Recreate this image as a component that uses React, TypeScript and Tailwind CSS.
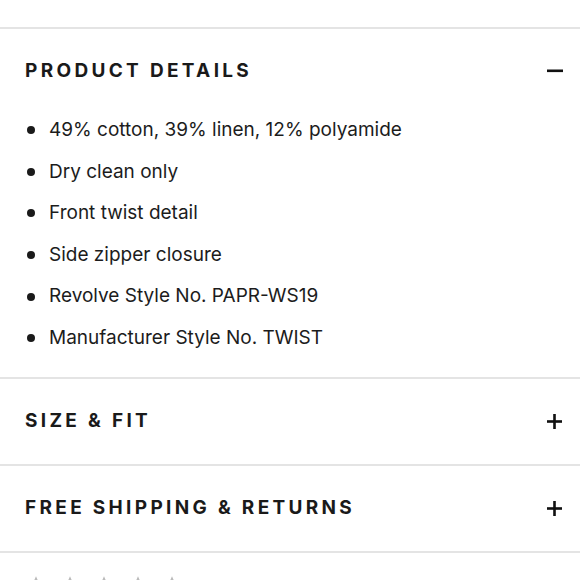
import React from "react";

const items = [
  "49% cotton, 39% linen, 12% polyamide",
  "Dry clean only",
  "Front twist detail",
  "Side zipper closure",
  "Revolve Style No. PAPR-WS19",
  "Manufacturer Style No. TWIST",
];

function Minus() {
  return (
    <svg width="16" height="4" viewBox="0 0 16 4">
      <rect x="0" y="0.5" width="16" height="2.6" fill="#111" />
    </svg>
  );
}

function Plus() {
  return (
    <svg width="15" height="15" viewBox="0 0 15 15">
      <rect x="0" y="6.2" width="15" height="2.6" fill="#111" />
      <rect x="6.2" y="0" width="2.6" height="15" fill="#111" />
    </svg>
  );
}

function Star() {
  return (
    <svg width="14" height="14" viewBox="0 0 24 24">
      <path d="M12 2l3 7 7 .6-5.3 4.7 1.6 7.2L12 17.8 5.7 21.5l1.6-7.2L2 9.6 9 9z" fill="#bbb" />
    </svg>
  );
}

export default function App() {
  return (
    <div
      className="w-[580px] h-[580px] overflow-hidden bg-white text-[#1a1a1a]"
      style={{ fontFamily: "Inter, 'Noto Sans', sans-serif" }}
    >
      <div className="h-[27px]" />
      <div className="border-t-2 border-[#e4e4e4]">
        <div className="h-[80px] pt-[4px] flex items-center justify-between pl-[25px] pr-[17px]">
          <span className="text-[19px] font-bold tracking-[0.175em]">PRODUCT DETAILS</span>
          <Minus />
        </div>
        <ul className="pb-[18px]">
          {items.map((t) => (
            <li key={t} className="h-[41.6px] pt-[1px] flex items-center pl-[27px] text-[19px] text-[#1c1c1c]">
              <span className="w-[8px] h-[8px] rounded-full bg-[#1a1a1a] mr-[14px]" />
              <span>{t}</span>
            </li>
          ))}
        </ul>
      </div>
      <div className="border-t-2 border-[#e4e4e4] h-[87px] flex items-center justify-between pl-[25px] pr-[18px]">
        <span className="text-[19px] font-bold tracking-[0.175em]">SIZE &amp; FIT</span>
        <Plus />
      </div>
      <div className="border-t-2 border-[#e4e4e4] h-[87px] flex items-center justify-between pl-[25px] pr-[18px]">
        <span className="text-[19px] font-bold tracking-[0.175em]">FREE SHIPPING &amp; RETURNS</span>
        <Plus />
      </div>
      <div className="border-t-2 border-[#e4e4e4] pt-[22px] pl-[29px] flex gap-[20px]">
        <Star />
        <Star />
        <Star />
        <Star />
        <Star />
      </div>
    </div>
  );
}
